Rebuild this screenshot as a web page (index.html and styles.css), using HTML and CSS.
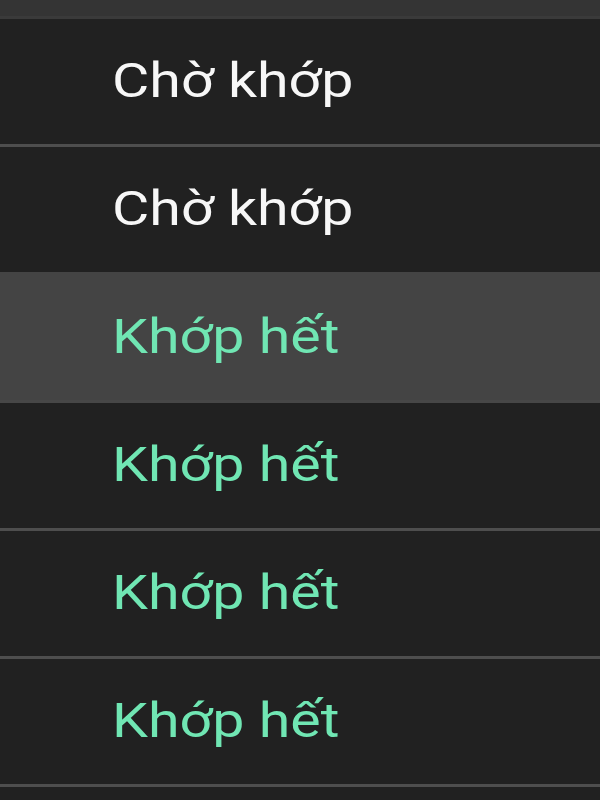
FILE: index.html
```html
<!DOCTYPE html>
<html lang="vi">
<head>
<meta charset="utf-8">
<link rel="stylesheet" href="styles.css">
</head>
<body>
<div class="list">
  <div class="top"></div>
  <div class="row first"><span class="label pending">Chờ khớp</span></div>
  <div class="row"><span class="label pending">Chờ khớp</span></div>
  <div class="row active"><span class="label done">Khớp hết</span></div>
  <div class="row after-active"><span class="label done">Khớp hết</span></div>
  <div class="row"><span class="label done">Khớp hết</span></div>
  <div class="row"><span class="label done">Khớp hết</span></div>
  <div class="row"></div>
</div>
</body>
</html>
```
FILE: styles.css
```css
html, body {
  margin: 0;
  padding: 0;
  background: #212121;
  height: 800px;
  overflow: hidden;
}
.list {
  display: flex;
  flex-direction: column;
}
.top {
  height: 16px;
  background: #343434;
}
.row {
  height: 125px;
  border-top: 3px solid #4e4e4e;
  display: flex;
  align-items: center;
  padding-left: 112px;
  flex-shrink: 0;
}
.row.first {
  border-top-color: #3a3a3a;
}
.row.active {
  background: #444444;
  border-top-color: #444444;
}
.row.after-active {
  border-top-color: #474747;
}
.label {
  font-family: Roboto, "Liberation Sans", sans-serif;
  font-size: 49px;
  line-height: 1;
  display: inline-block;
  transform: scaleX(1.17);
  transform-origin: left center;
  position: relative;
  top: -1px;
}
.pending { color: #f7f7f7; }
.done { color: #70e6b3; }
```
